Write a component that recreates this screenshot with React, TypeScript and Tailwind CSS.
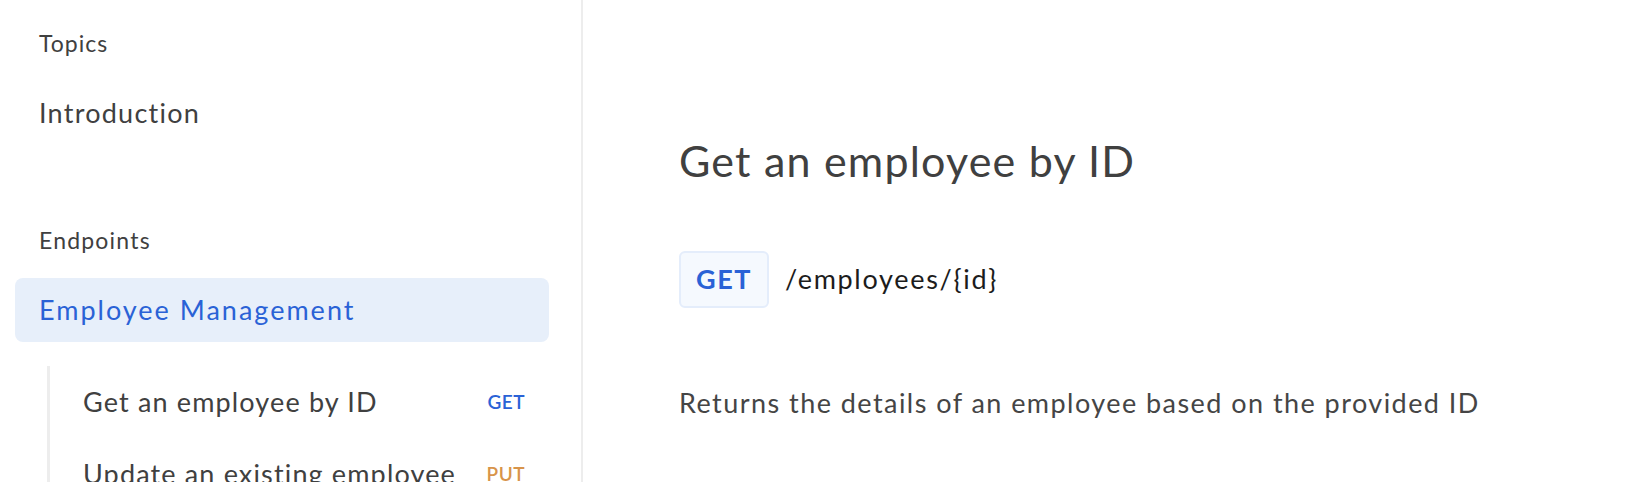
import React from 'react';

type Endpoint = { title: string; method: 'GET' | 'PUT'; };

const endpoints: Endpoint[] = [
  { title: 'Get an employee by ID', method: 'GET' },
  { title: 'Update an existing employee', method: 'PUT' },
];

const methodColor: Record<Endpoint['method'], string> = {
  GET: 'text-[#2a62d6]',
  PUT: 'text-[#d8944a]',
};

const Sidebar: React.FC = () => (
  <aside className="w-[583px] shrink-0 border-r-2 border-[#ededed] h-[482px] overflow-hidden">
    <div className="mt-[28px] h-[30px] flex items-center pl-[39px] text-[23px] tracking-[1px] text-[#404040]">Topics</div>
    <div className="mt-[31px] h-[48px] flex items-center pl-[39px] text-[27px] tracking-[1.25px] text-[#404040]">
      Introduction
    </div>
    <div className="mt-[88px] h-[30px] flex items-center pl-[39px] text-[23px] tracking-[1.2px] text-[#404040]">Endpoints</div>
    <div className="mt-[23px] ml-[15px] w-[534px] h-[64px] rounded-[8px] bg-[#e7effa] flex items-center pl-[24px] text-[27px] tracking-[2px] text-[#2a62d6]">
      Employee Management
    </div>
    <ul className="mt-[24px] ml-[47px] w-[502px] border-l-[3px] border-[#ededed]">
      {endpoints.map((e) => (
        <li key={e.title} className="h-[72px] flex items-center justify-between pl-[33px] pr-[24px]">
          <span className="text-[27px] tracking-[1.15px] text-[#404040] whitespace-nowrap">{e.title}</span>
          <span className={`text-[19px] tracking-[0.5px] font-semibold ${methodColor[e.method]}`}>{e.method}</span>
        </li>
      ))}
    </ul>
  </aside>
);

export default function App() {
  return (
    <div
      className="flex w-[1626px] h-[482px] bg-white overflow-hidden"
      style={{ fontFamily: 'Lato, "Noto Sans", sans-serif' }}
    >
      <Sidebar />
      <main className="flex-1 pl-[96px] flex flex-col">
        <h1 className="mt-[135px] h-[52px] flex items-center text-[43px] tracking-[1.2px] text-[#404040] font-normal">
          Get an employee by ID
        </h1>
        <div className="mt-[64px] flex items-center gap-[16px]">
          <span className="w-[90px] h-[57px] rounded-[6px] border-2 border-[#e4edfb] bg-[#f5f9fe] flex items-center justify-center text-[27px] tracking-[1.5px] font-bold text-[#2a62d6]">
            GET
          </span>
          <span className="text-[27px] tracking-[1.7px] text-[#1c1c1c]">/employees/&#123;id&#125;</span>
        </div>
        <p className="mt-[80px] h-[30px] flex items-center text-[27px] tracking-[1.45px] text-[#454545]">
          Returns the details of an employee based on the provided ID
        </p>
      </main>
    </div>
  );
}
